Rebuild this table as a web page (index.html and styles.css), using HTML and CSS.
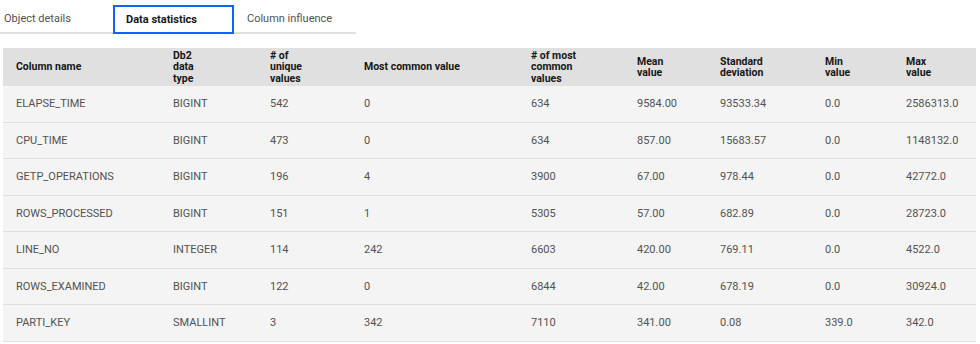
FILE: index.html
```html
<!DOCTYPE html>
<html lang="en">
<head>
  <meta charset="UTF-8">
  <title>Data statistics</title>
  <link rel="stylesheet" href="styles.css">
</head>
<body>
  <div class="tabs">
    <div class="tab">Object details</div>
    <div class="tab active">Data statistics</div>
    <div class="tab">Column influence</div>
  </div>

  <div class="table-wrap">
    <table class="stats">
      <colgroup>
        <col class="c-name">
        <col class="c-type">
        <col class="c-unique">
        <col class="c-common">
        <col class="c-ncommon">
        <col class="c-mean">
        <col class="c-std">
        <col class="c-min">
        <col class="c-max">
      </colgroup>
      <thead>
        <tr>
          <th>Column name</th>
          <th>Db2<br>data<br>type</th>
          <th># of<br>unique<br>values</th>
          <th>Most common value</th>
          <th># of most<br>common<br>values</th>
          <th>Mean<br>value</th>
          <th>Standard<br>deviation</th>
          <th>Min<br>value</th>
          <th>Max<br>value</th>
        </tr>
      </thead>
      <tbody>
        <tr><td>ELAPSE_TIME</td><td>BIGINT</td><td>542</td><td>0</td><td>634</td><td>9584.00</td><td>93533.34</td><td>0.0</td><td>2586313.0</td></tr>
        <tr><td>CPU_TIME</td><td>BIGINT</td><td>473</td><td>0</td><td>634</td><td>857.00</td><td>15683.57</td><td>0.0</td><td>1148132.0</td></tr>
        <tr><td>GETP_OPERATIONS</td><td>BIGINT</td><td>196</td><td>4</td><td>3900</td><td>67.00</td><td>978.44</td><td>0.0</td><td>42772.0</td></tr>
        <tr><td>ROWS_PROCESSED</td><td>BIGINT</td><td>151</td><td>1</td><td>5305</td><td>57.00</td><td>682.89</td><td>0.0</td><td>28723.0</td></tr>
        <tr><td>LINE_NO</td><td>INTEGER</td><td>114</td><td>242</td><td>6603</td><td>420.00</td><td>769.11</td><td>0.0</td><td>4522.0</td></tr>
        <tr><td>ROWS_EXAMINED</td><td>BIGINT</td><td>122</td><td>0</td><td>6844</td><td>42.00</td><td>678.19</td><td>0.0</td><td>30924.0</td></tr>
        <tr><td>PARTI_KEY</td><td>SMALLINT</td><td>3</td><td>342</td><td>7110</td><td>341.00</td><td>0.08</td><td>339.0</td><td>342.0</td></tr>
      </tbody>
    </table>
  </div>
</body>
</html>
```

FILE: styles.css
```css
body {
  margin: 0;
  font-family: Roboto, "Noto Sans", Arial, sans-serif;
  font-size: 11px;
  color: #525252;
  background: #fff;
}

/* tabs */
.tabs {
  display: flex;
  margin-left: -9px;
  padding-top: 5px;
}
.tab {
  width: 122px;
  height: 29px;
  box-sizing: border-box;
  padding: 0 13px;
  display: flex;
  align-items: center;
  border-bottom: 2px solid #e0e0e0;
  color: #525252;
  font-size: 11px;
}
.tab.active {
  width: 121px;
  border: 2px solid #0f62fe;
  padding-left: 11px;
  color: #161616;
  font-weight: 700;
}

/* table */
.table-wrap {
  padding: 14px 0 0 3px;
}
.stats {
  width: 973px;
  table-layout: fixed;
  border-collapse: separate;
  border-spacing: 0;
}
.c-name { width: 157px; }
.c-type { width: 97px; }
.c-unique { width: 94px; }
.c-common { width: 167px; }
.c-ncommon { width: 106px; }
.c-mean { width: 83px; }
.c-std { width: 105px; }
.c-min { width: 81px; }
.c-max { width: 83px; }

.stats th {
  height: 38px;
  padding: 0 0 0 13px;
  background: #e0e0e0;
  color: #161616;
  font-size: 10.5px;
  font-weight: 700;
  text-align: left;
  line-height: 11.5px;
  vertical-align: middle;
}
.stats td {
  height: 35.5px;
  padding: 0 0 0 13px;
  background: #f4f4f4;
  border-bottom: 1px solid #e0e0e0;
  vertical-align: middle;
  white-space: nowrap;
}
```
